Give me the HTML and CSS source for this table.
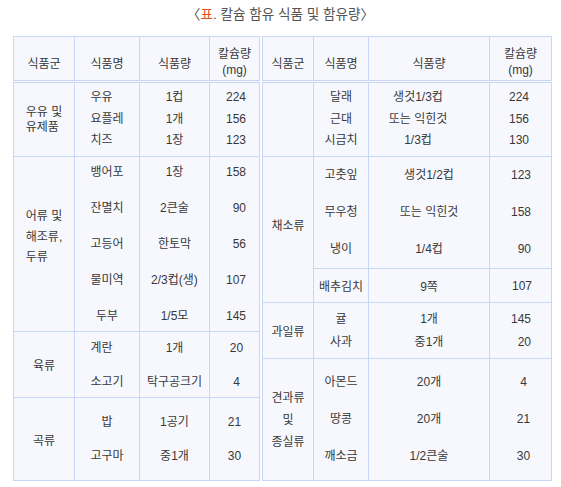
FILE: index.html
```html
<!DOCTYPE html>
<html lang="ko">
<head>
<meta charset="utf-8">
<title>칼슘 함유 식품 및 함유량</title>
<link rel="stylesheet" href="styles.css">
</head>
<body>
<h1 class="title">〈<span class="hl">표</span>. 칼슘 함유 식품 및 함유량〉</h1>
<div class="tables">
  <table class="tbl tbl-left">
    <colgroup><col class="l1"><col class="l2"><col class="l3"><col class="l4"></colgroup>
    <thead>
      <tr class="hd"><th>식품군</th><th>식품명</th><th>식품량</th><th><span class="mg">칼슘량<br>(mg)</span></th></tr>
    </thead>
    <tbody>
      <tr class="h75">
        <td><span class="blk lh15">우유 및<br>유제품</span></td>
        <td><span class="blk lh21">우유<br>요플레<br>치즈</span></td>
        <td class="lh21">1컵<br>1개<br>1장</td>
        <td class="lh21 num-r13">224<br>156<br>123</td>
      </tr>
      <tr class="h175">
        <td class="pb14"><span class="blk lh20">어류 및<br>해조류,<br>두류</span></td>
        <td><div class="lh36 tight3">뱅어포<br>잔멸치<br>고등어<br>물미역<br>두부</div></td>
        <td><div class="lh36 tight3">1장<br>2큰술<br>한토막<br>2/3컵(생)<br>1/5모</div></td>
        <td class="num-r13"><div class="lh36 tight3">158<br>90<br>56<br>107<br>145</div></td>
      </tr>
      <tr class="h66">
        <td>육류</td>
        <td><div class="lh34 tight2"><span class="blk">계란<br>소고기</span></div></td>
        <td><div class="lh34 tight2">1개<br>탁구공크기</div></td>
        <td class="num-c4"><div class="lh34 tight2">20<br>4</div></td>
      </tr>
      <tr class="h83">
        <td>곡류</td>
        <td class="lh34">밥<br>고구마</td>
        <td class="lh34">1공기<br>중1개</td>
        <td class="lh34">21<br>30</td>
      </tr>
    </tbody>
  </table>
  <table class="tbl tbl-right">
    <colgroup><col class="r1"><col class="r2"><col class="r3"><col class="r4"></colgroup>
    <thead>
      <tr class="hd"><th>식품군</th><th>식품명</th><th>식품량</th><th><span class="mg">칼슘량<br>(mg)</span></th></tr>
    </thead>
    <tbody>
      <tr class="h75">
        <td></td>
        <td class="lh21">달래<br>근대<br>시금치</td>
        <td class="lh21 pr22">생것1/3컵<br>또는 익힌것<br>1/3컵</td>
        <td class="lh21 num-r22">224<br>156<br>130</td>
      </tr>
      <tr class="h112">
        <td rowspan="2" class="pb10">채소류</td>
        <td class="lh37">고춧잎<br>무우청<br>냉이</td>
        <td class="lh37">생것1/2컵<br>또는 익힌것<br>1/4컵</td>
        <td class="lh37 num-r20">123<br>158<br>90</td>
      </tr>
      <tr class="h34">
        <td>배추김치</td>
        <td>9쪽</td>
        <td class="num-r19">107</td>
      </tr>
      <tr class="h56">
        <td>과일류</td>
        <td class="lh23">귤<br>사과</td>
        <td class="lh23">1개<br>중1개</td>
        <td class="lh23 num-r20">145<br>20</td>
      </tr>
      <tr class="h122">
        <td class="lh22">견과류<br>및<br>종실류</td>
        <td class="lh37">아몬드<br>땅콩<br>깨소금</td>
        <td class="lh37">20개<br>20개<br>1/2큰술</td>
        <td class="lh37 num-c6">4<br>21<br>30</td>
      </tr>
    </tbody>
  </table>
</div>
</body>
</html>
```

FILE: styles.css
```css
html, body {
  margin: 0;
  padding: 0;
  background: #ffffff;
}

body {
  font-family: "Liberation Sans", "Noto Sans CJK KR", sans-serif;
  color: #383838;
}

.title {
  margin: 0;
  height: 30px;
  line-height: 30px;
  font-size: 13.6px;
  font-weight: normal;
  color: #555555;
  text-align: center;
}

.title .hl {
  color: #e4531c;
}

.tables {
  display: flex;
  align-items: flex-start;
  gap: 2px;
  margin-top: 6px;
  padding-left: 13px;
}

.tbl {
  border-collapse: collapse;
  table-layout: fixed;
  background: #f7f8fe;
  font-size: 12px;
}

.tbl-left { width: 246px; }
.tbl-right { width: 289px; }

.l1 { width: 61px; }
.l2 { width: 65px; }
.l3 { width: 70px; }
.l4 { width: 50px; }

.r1 { width: 51px; }
.r2 { width: 55px; }
.r3 { width: 121px; }
.r4 { width: 62px; }

.tbl th,
.tbl td {
  border: 1px solid #c8d6f7;
  padding: 0;
  text-align: center;
  vertical-align: middle;
  font-weight: normal;
  white-space: nowrap;
}

.tbl thead th {
  border-bottom: 3px double #c8d6f7;
  height: 36px;
  padding-top: 7px;
}

.mg {
  display: inline-block;
  line-height: 16px;
}

.h75 { height: 75px; }
.h175 { height: 175px; }
.h66 { height: 66px; }
.h83 { height: 83px; }
.h112 { height: 112px; }
.h34 { height: 34px; }
.h56 { height: 56px; }
.h122 { height: 122px; }

.blk {
  display: inline-block;
  text-align: left;
}

.lh15 { line-height: 15px; }
.lh20 { line-height: 20.5px; }
.lh21 { line-height: 21.5px; }
.lh22 { line-height: 22px; }
.lh23 { line-height: 23px; }
.lh34 { line-height: 34px; }
.lh36 { line-height: 36px; }
.lh37 { line-height: 37px; }

.tight3 { margin: -3px 0; }
.tight2 { margin: -2px 0; }

.pb14 { padding-bottom: 14px !important; }
.pb10 { padding-bottom: 10px !important; }
.pr22 { padding-right: 22px !important; }

.num-r13 { text-align: right !important; padding-right: 13px !important; }
.num-r19 { text-align: right !important; padding-right: 19px !important; }
.num-r20 { text-align: right !important; padding-right: 20px !important; }
.num-r22 { text-align: right !important; padding-right: 22px !important; }
.num-c4 { padding-left: 4px !important; }
.num-c6 { padding-left: 6px !important; }
```
